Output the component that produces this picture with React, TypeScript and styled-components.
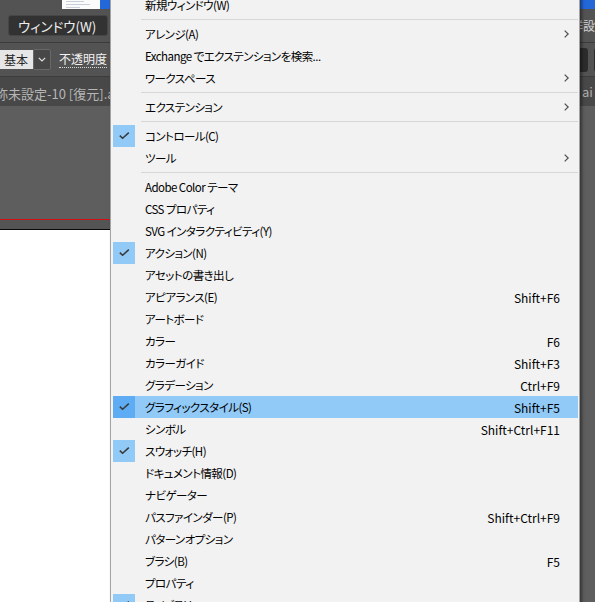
import React from 'react';
import styled, { createGlobalStyle } from 'styled-components';

const GlobalStyle = createGlobalStyle`
  html, body {
    margin: 0;
    padding: 0;
    background: #5e5e5e;
    overflow: hidden;
  }
  * {
    box-sizing: border-box;
  }
`;

const Screen = styled.div`
  position: relative;
  width: 595px;
  height: 602px;
  overflow: hidden;
  display: flex;
  flex-direction: column;
  font-family: "Noto Sans CJK JP", "Noto Sans", sans-serif;
  font-feature-settings: "palt";
`;

const TopStrip = styled.div`
  display: flex;
  height: 9px;
  background: #535353;
`;

const Thumb = styled.div`
  width: 38px;
  margin-left: 62px;
  background: #fbfbfb;
  display: flex;
  flex-direction: column;
  gap: 2px;
  padding: 1px 4px;
`;

const ThumbLine = styled.div<{ $w: number }>`
  height: 1px;
  width: ${(p) => p.$w}px;
  background: #c9cfd8;
`;

const TaskBlue = styled.div`
  flex: 1;
  background: #2467d9;
`;

const MenuBar = styled.div`
  display: flex;
  align-items: center;
  justify-content: space-between;
  height: 34px;
  padding-left: 8px;
  background: #535353;
  border-bottom: 1px solid #3b3b3b;
`;

const WindowButton = styled.div`
  display: flex;
  align-items: center;
  width: 100px;
  height: 21px;
  padding-left: 9px;
  background: #323232;
  border: 1px solid #464646;
  border-radius: 3px;
  color: #ededed;
  font-size: 13.5px;
`;

const ClipText = styled.div<{ $w: number; $shift: number; $color: string; $size: number }>`
  width: ${(p) => p.$w}px;
  overflow: hidden;
  white-space: nowrap;
  color: ${(p) => p.$color};
  font-size: ${(p) => p.$size}px;

  span {
    display: inline-block;
    margin-left: ${(p) => p.$shift}px;
  }
`;

const ControlBar = styled.div`
  display: flex;
  align-items: center;
  justify-content: space-between;
  height: 34px;
  background: #535353;
  border-bottom: 1px solid #3c3c3c;
`;

const ControlGroup = styled.div`
  display: flex;
  align-items: center;
`;

const PresetBox = styled.div`
  display: flex;
  align-items: center;
  width: 33px;
  height: 19px;
  padding-left: 4px;
  background: #e6e6e6;
  color: #262626;
  font-size: 12px;
`;

const DropButton = styled.div`
  display: flex;
  align-items: center;
  justify-content: center;
  width: 18px;
  height: 21px;
  background: #474747;
  border: 1px solid #686868;
  border-radius: 2px;
`;

const OpacityLabel = styled.div`
  margin-left: 8px;
  color: #f2f2f2;
  font-size: 12px;
  line-height: 16px;
  border-bottom: 1px dotted #d8d8d8;
`;

const RightTools = styled.div`
  display: flex;
  gap: 6px;
  margin-right: -39px;
`;

const ToolBox = styled.div`
  width: 40px;
  height: 24px;
  background: #2c2c2c;
  border-radius: 3px;
`;

const TabRow = styled.div`
  display: flex;
  align-items: center;
  justify-content: space-between;
  height: 29px;
  background: #484848;
`;

const TabClip = styled.div`
  width: 111px;
  overflow: hidden;
  white-space: nowrap;
`;

const TabTitle = styled.span`
  display: inline-block;
  margin-left: -18px;
  color: #b6b6b6;
  font-size: 13px;
`;

const Workspace = styled.div`
  flex: 1;
  display: flex;
  background: #5e5e5e;
`;

const DocColumn = styled.div`
  width: 300px;
  display: flex;
  flex-direction: column;
`;

const Pasteboard = styled.div`
  height: 114px;
  background: #5e5e5e;
  border-bottom: 1px solid #d40f0f;
`;

const RulerBand = styled.div`
  height: 10px;
  background: #545454;
  border-bottom: 1px solid #0a0a0a;
`;

const Artboard = styled.div`
  flex: 1;
  background: #ffffff;
`;

const Menu = styled.div`
  position: absolute;
  left: 110px;
  top: -9px;
  width: 470px;
  padding: 2px 1px 2px 2px;
  background: #f2f2f2;
  border: 1px solid #a3a3a3;
  box-shadow: 2px 2px 3px rgba(0, 0, 0, 0.45);
  color: #000;
  font-size: 12px;
`;

const Row = styled.div<{ $active?: boolean }>`
  display: flex;
  align-items: center;
  height: 22px;
  background: ${(p) => (p.$active ? '#91c9f7' : 'transparent')};
`;

const CheckCell = styled.span<{ $on?: boolean; $active?: boolean }>`
  display: flex;
  align-items: center;
  justify-content: center;
  width: 22px;
  height: 22px;
  flex-shrink: 0;
  background: ${(p) => (!p.$on ? 'transparent' : p.$active ? '#5eadf4' : '#91c9f7')};
`;

const Label = styled.span`
  flex: 1;
  margin-left: 10px;
  font-size: 11.5px;
  letter-spacing: -0.55px;
  white-space: nowrap;
`;

const Shortcut = styled.span`
  margin-right: 18px;
  white-space: nowrap;
`;

const SubArrow = styled.svg`
  margin-right: 9px;
`;

const Separator = styled.div`
  height: 7px;
  padding-top: 3px;
  padding-left: 28px;

  &::after {
    content: '';
    display: block;
    height: 1px;
    background: #d6d6d6;
  }
`;

type Entry =
  | { sep: true }
  | { sep?: false; label: string; keys?: string; sub?: boolean; checked?: boolean; active?: boolean };

const entries: Entry[] = [
  { label: '新規ウィンドウ(W)' },
  { sep: true },
  { label: 'アレンジ(A)', sub: true },
  { label: 'Exchange でエクステンションを検索...' },
  { label: 'ワークスペース', sub: true },
  { sep: true },
  { label: 'エクステンション', sub: true },
  { sep: true },
  { label: 'コントロール(C)', checked: true },
  { label: 'ツール', sub: true },
  { sep: true },
  { label: 'Adobe Color テーマ' },
  { label: 'CSS プロパティ' },
  { label: 'SVG インタラクティビティ(Y)' },
  { label: 'アクション(N)', checked: true },
  { label: 'アセットの書き出し' },
  { label: 'アピアランス(E)', keys: 'Shift+F6' },
  { label: 'アートボード' },
  { label: 'カラー', keys: 'F6' },
  { label: 'カラーガイド', keys: 'Shift+F3' },
  { label: 'グラデーション', keys: 'Ctrl+F9' },
  { label: 'グラフィックスタイル(S)', keys: 'Shift+F5', checked: true, active: true },
  { label: 'シンボル', keys: 'Shift+Ctrl+F11' },
  { label: 'スウォッチ(H)', checked: true },
  { label: 'ドキュメント情報(D)' },
  { label: 'ナビゲーター' },
  { label: 'パスファインダー(P)', keys: 'Shift+Ctrl+F9' },
  { label: 'パターンオプション' },
  { label: 'ブラシ(B)', keys: 'F5' },
  { label: 'プロパティ' },
  { label: 'ライブラリ', checked: true },
];

const CheckMark = () => (
  <svg width="22" height="22" viewBox="0 0 22 22">
    <path d="M6.8 10.6 L9.6 13.3 L15.8 7.6" fill="none" stroke="#3a3a3a" strokeWidth="1.5" />
  </svg>
);

const App: React.FC = () => {
  return (
    <Screen>
      <GlobalStyle />
      <TopStrip>
        <Thumb>
          <ThumbLine $w={18} />
          <ThumbLine $w={24} />
          <ThumbLine $w={14} />
        </Thumb>
        <TaskBlue />
      </TopStrip>

      <MenuBar>
        <WindowButton>ウィンドウ(W)</WindowButton>
        <ClipText $w={15} $shift={-9} $color="#d2d2d2" $size={12}>
          <span>詳設定</span>
        </ClipText>
      </MenuBar>

      <ControlBar>
        <ControlGroup>
          <PresetBox>基本</PresetBox>
          <DropButton>
            <svg width="8" height="5" viewBox="0 0 8 5">
              <path d="M0.8 0.8 L4 4 L7.2 0.8" fill="none" stroke="#e0e0e0" strokeWidth="1.2" />
            </svg>
          </DropButton>
          <OpacityLabel>不透明度</OpacityLabel>
        </ControlGroup>
        <RightTools>
          <ToolBox />
          <ToolBox />
        </RightTools>
      </ControlBar>

      <TabRow>
        <TabClip>
          <TabTitle>名称未設定-10 [復元].ai @ 100% (CMYK/プレビュー)</TabTitle>
        </TabClip>
        <ClipText $w={13} $shift={0} $color="#aeaeae" $size={13}>
          <span>ai CMYK</span>
        </ClipText>
      </TabRow>

      <Workspace>
        <DocColumn>
          <Pasteboard />
          <RulerBand />
          <Artboard />
        </DocColumn>
      </Workspace>

      <Menu>
        {entries.map((e, i) =>
          e.sep ? (
            <Separator key={i} />
          ) : (
            <Row key={i} $active={e.active}>
              <CheckCell $on={e.checked} $active={e.active}>
                {e.checked && <CheckMark />}
              </CheckCell>
              <Label>{e.label}</Label>
              {e.keys && <Shortcut>{e.keys}</Shortcut>}
              {e.sub && (
                <SubArrow width="5" height="8" viewBox="0 0 5 8">
                  <path d="M0.7 0.6 L4.2 4 L0.7 7.4" fill="none" stroke="#4a4a4a" strokeWidth="1.2" />
                </SubArrow>
              )}
            </Row>
          )
        )}
      </Menu>
    </Screen>
  );
};

export default App;
